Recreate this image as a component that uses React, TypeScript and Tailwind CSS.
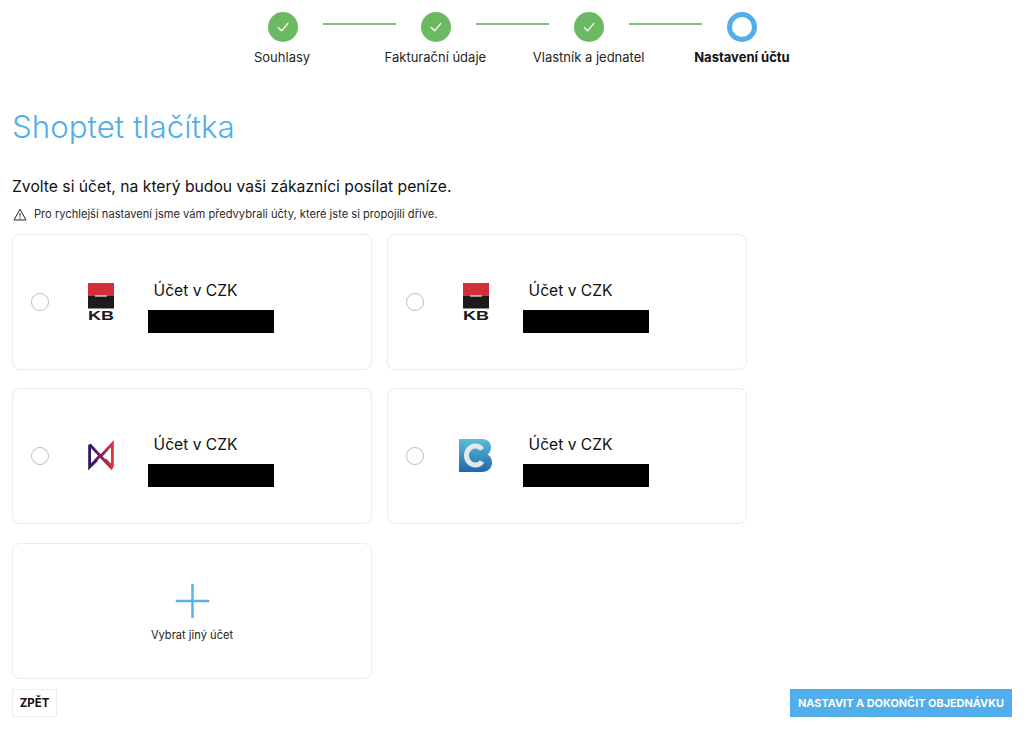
import React from "react";

const Check = () => (
  <svg width="14" height="14" viewBox="0 0 14 14" fill="none" stroke="#fff" strokeWidth="1.3" strokeLinecap="round" strokeLinejoin="round">
    <path d="M2.2 7.4 5.6 10.8 11.9 3.4" />
  </svg>
);

const Done = () => (
  <div className="w-[30px] h-[30px] rounded-full bg-[#6cb963] flex items-center justify-center shrink-0">
    <Check />
  </div>
);

const Line = () => <div className="w-[73px] h-[2px] bg-[#7cc274] mx-[25px] shrink-0 -mt-[6px]" />;

const Stepper = () => (
  <div className="flex flex-col items-center pt-[12px]">
    <div className="flex items-center">
      <Done />
      <Line />
      <Done />
      <Line />
      <Done />
      <Line />
      <div className="w-[30px] h-[30px] rounded-full border-[5px] border-[#52aeea] shrink-0" />
    </div>
    <div className="flex mt-[5px] -mx-[60px] text-[13px] leading-[20px] text-[#1f1f1f]">
      <div className="w-[153.3px] text-center">Souhlasy</div>
      <div className="w-[153.3px] text-center">Fakturační údaje</div>
      <div className="w-[153.3px] text-center">Vlastník a jednatel</div>
      <div className="w-[153.3px] text-center font-bold text-[#111]">Nastavení účtu</div>
    </div>
  </div>
);

const KB = () => (
  <svg width="28" height="40" viewBox="0 0 28 40">
    <rect x="1" y="1" width="26" height="13" fill="#d32f3a" />
    <rect x="1" y="14" width="26" height="12.500" fill="#1c1c1e" />
    <rect x="8" y="13.4" width="12" height="1.2" fill="#f3e4e4" />
    <text x="14" y="37.5" textAnchor="middle" fontFamily="'Liberation Sans', sans-serif" fontWeight="700" fontSize="13" textLength="26" lengthAdjust="spacingAndGlyphs" fill="#1a1a1a">KB</text>
  </svg>
);

const MLogo = () => (
  <svg width="28" height="40" viewBox="0 0 28 40">
    <defs>
      <linearGradient id="mg" x1="0" x2="1" y1="0" y2="0">
        <stop offset="0" stopColor="#27195f" />
        <stop offset="0.5" stopColor="#7b1f5c" />
        <stop offset="1" stopColor="#e2333a" />
      </linearGradient>
    </defs>
    <path d="M2.600 8.500V31L14 18.500 M2.600 8.500 25.400 33 M25.400 31V7.500L14 20 M25.400 31 18 23.500 M2.600 31 10 24" fill="none" stroke="url(#mg)" strokeWidth="2.800" strokeLinejoin="miter" />
  </svg>
);

const CLogo = () => (
  <svg width="36" height="40" viewBox="0 0 36 40">
    <defs>
      <linearGradient id="cg" x1="0" x2="0" y1="0" y2="1">
        <stop offset="0" stopColor="#5cbdd8" />
        <stop offset="1" stopColor="#1f68ac" />
      </linearGradient>
    </defs>
    <path d="M1 3H24C30 3 33 7 33 11.5 33 14.500 31.500 17 29.500 18.500 32.500 20 34 23 34 26.500 34 32 30 36 24 36H1Z" fill="url(#cg)" />
    <path d="M24 13.500C22.500 11 20 10 17.500 10 12.500 10 8.500 14 8.500 19.500 8.500 25 12.500 29 17.500 29 20 29 22.500 28 24 25.500" fill="none" stroke="#e4e8ea" strokeWidth="5" />
  </svg>
);

const Card = ({ logo }: { logo: React.ReactNode }) => (
  <div className="h-[136px] border border-[#ebebeb] rounded-[8px] bg-white flex items-center pl-[18px]">
    <div className="w-[18px] h-[18px] rounded-full border border-[#bdbdbd] shrink-0" />
    <div className="w-[98.6px] flex justify-center shrink-0 pl-[5px]">{logo}</div>
    <div className="flex flex-col items-start mt-[8px]">
      <div className="pl-[6px] text-[15.6px] leading-[24px] text-[#111]">Účet v CZK</div>
      <div className="w-[126px] h-[23px] bg-black mt-[7px]" />
    </div>
  </div>
);

export default function App() {
  return (
    <div className="w-[1024px] h-[730px] bg-white overflow-hidden font-['Inter',sans-serif] flex flex-col">
      <Stepper />
      <div className="px-[12px] flex flex-col grow">
        <h1 className="text-[31.3px] leading-[40px] font-light text-[#52aeea] mt-[40px]">Shoptet tlačítka</h1>
        <p className="text-[15.7px] leading-[24px] text-[#111] mt-[28px]">Zvolte si účet, na který budou vaši zákazníci posílat peníze.</p>
        <div className="flex items-center mt-[6px] text-[11.14px] leading-[18px] text-[#2a2a2a]">
          <svg width="14" height="13" viewBox="0 0 14 13" fill="none" stroke="#222" strokeWidth="1" strokeLinejoin="round" className="ml-[1px] mr-[7px]">
            <path d="M7 1.2 13 12H1Z" />
            <path d="M7 5v3.800M7 9.800v1" />
          </svg>
          Pro rychlejší nastavení jsme vám předvybrali účty, které jste si propojili dříve.
        </div>
        <div className="grid grid-cols-[360px_360px] gap-x-[15px] gap-y-[18px] mt-[11px]">
          <Card logo={<KB />} />
          <Card logo={<KB />} />
          <Card logo={<MLogo />} />
          <Card logo={<CLogo />} />
          <div className="h-[136px] mt-[1px] border border-[#ebebeb] rounded-[8px] flex flex-col items-center justify-center pt-[4px]">
            <svg width="34" height="34" viewBox="0 0 34 34" stroke="#5ab2ec" strokeWidth="2.500" className="translate-x-[0.5px]">
              <path d="M17 0V34M0 17H34" />
            </svg>
            <div className="text-[11.14px] leading-[16px] text-[#222] mt-[9px]">Vybrat jiný účet</div>
          </div>
        </div>
        <div className="flex justify-between items-center mt-[10px]">
          <button className="h-[28px] w-[45px] border border-[#ececec] bg-white text-[11.5px] font-bold text-[#111] pt-[1px]">ZPĚT</button>
          <button className="h-[28px] w-[222px] bg-[#52aeea] text-white text-[10.9px] font-bold">NASTAVIT A DOKONČIT OBJEDNÁVKU</button>
        </div>
      </div>
    </div>
  );
}
